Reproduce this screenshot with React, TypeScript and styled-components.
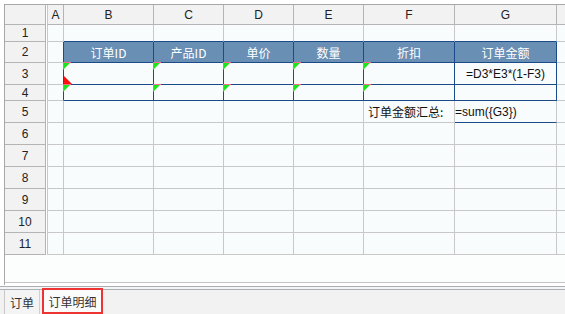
import styled, { createGlobalStyle } from "styled-components";

const GlobalStyle = createGlobalStyle`
	html, body {
		margin: 0;
		padding: 0;
		background: #ffffff;
	}
	body {
		font-family: "Liberation Sans", "Noto Sans CJK SC", sans-serif;
	}
`;

const BLUE = "#1c4b8c";
const GRID = "#c8c8c8";
const HEAD_LINE = "#b4b4b4";
const CELL_BG = "#f8fcfd";

const COL_WIDTHS = [41, 18, 90, 70, 70, 70, 91, 102, 40];
const ROW_HEIGHTS = [17, 21, 22, 16, 22, 22, 22, 22, 22, 22, 22];
const LETTERS = ["A", "B", "C", "D", "E", "F", "G", ""];
const TABLE_HEAD = ["订单ID", "产品ID", "单价", "数量", "折扣", "订单金额"];

const Page = styled.div`
	width: 565px;
	height: 314px;
	overflow: hidden;
	display: flex;
	flex-direction: column;
	background: #ffffff;
`;

const SheetFrame = styled.div`
	height: 286px;
	padding: 4px 0 0 4px;
	box-sizing: border-box;
	display: flex;
`;

const Grid = styled.div`
	flex: 1;
	display: flex;
	flex-direction: column;
	border-left: 1px solid #a8a8a8;
	border-top: 1px solid #a8a8a8;
	overflow: hidden;
`;

const Row = styled.div`
	display: flex;
	flex-shrink: 0;
`;

interface CellProps {
	$w: number;
	$h: number;
	$right?: string;
	$bottom?: string;
	$bg?: string;
	$align?: "left" | "center";
	$pad?: number;
	$inset?: boolean;
}

const Cell = styled.div<CellProps>`
	position: relative;
	box-sizing: border-box;
	flex-shrink: 0;
	width: ${(p) => (p.$inset ? p.$w - 1 : p.$w)}px;
	height: ${(p) => p.$h}px;
	margin-left: ${(p) => (p.$inset ? 1 : 0)}px;
	border-left: ${(p) => (p.$inset ? `1px solid ${GRID}` : "none")};
	border-right: 1px solid ${(p) => p.$right ?? GRID};
	border-bottom: 1px solid ${(p) => p.$bottom ?? GRID};
	background: ${(p) => p.$bg ?? CELL_BG};
	display: flex;
	align-items: center;
	justify-content: ${(p) => (p.$align === "left" ? "flex-start" : "center")};
	padding-left: ${(p) => p.$pad ?? 0}px;
	font-size: 12px;
	color: #111;
	white-space: nowrap;
`;

const HeadCell = styled(Cell)`
	background: #f2f2f2;
	border-right-color: ${HEAD_LINE};
	border-bottom-color: ${HEAD_LINE};
	color: #222;
`;

const TableHeadCell = styled(Cell)`
	background: #6a8fb5;
	color: #ffffff;
	font-family: "Noto Sans CJK SC", "Liberation Sans", sans-serif;
`;

const CjkText = styled.span`
	font-family: "Noto Sans CJK SC", sans-serif;
	font-size: 12px;
`;

const Filler = styled.div`
	height: 27px;
	flex-shrink: 0;
	background: #fcfefe;
	border-bottom: 1px solid #c4c4c4;
`;

const Divider = styled.div`
	height: 4px;
	background: #f4f4f4;
	border-top: 1px solid #a9b0b6;
	border-bottom: 1px solid #a9b0b6;
	box-sizing: border-box;
	margin-top: 1px;
`;

const TabBar = styled.div`
	flex: 1;
	display: flex;
	align-items: stretch;
	padding-left: 4px;
	background: #f2f2f2;
`;

interface TabProps {
	$active?: boolean;
}

const Tab = styled.div<TabProps>`
	box-sizing: border-box;
	display: flex;
	align-items: center;
	justify-content: center;
	white-space: nowrap;
	font-family: "Noto Sans CJK SC", sans-serif;
	font-size: 12px;
	color: #333;
	background: ${(p) => (p.$active ? "#fbfbfb" : "#f4f4f4")};
	border-left: ${(p) => (p.$active ? "none" : "1px solid #c8c8c8")};
	border-right: ${(p) => (p.$active ? "none" : "1px solid #d0d0d0")};
	outline: ${(p) => (p.$active ? "2px solid #ee3333" : "none")};
	outline-offset: -2px;
	margin-top: ${(p) => (p.$active ? -2 : 0)}px;
	margin-left: ${(p) => (p.$active ? 2 : 0)}px;
	height: ${(p) => (p.$active ? 26 : 24)}px;
	width: ${(p) => (p.$active ? 61 : 36)}px;
`;

const Marker = styled.svg`
	position: absolute;
	left: -1px;
	top: -1px;
	width: 8px;
	height: 8px;
`;

const ErrorMarker = styled.svg`
	position: absolute;
	left: 0;
	bottom: 0;
	width: 8px;
	height: 8px;
`;

function GreenMark() {
	return (
		<Marker viewBox="0 0 8 8">
			<polygon points="0,0 8,0 0,8" fill="#1ee41e" />
			<rect x="0" y="0" width="8" height="1" fill="#f0708a" />
			<rect x="0" y="0" width="1" height="7" fill="#f0708a" />
		</Marker>
	);
}

function RedMark() {
	return (
		<ErrorMarker viewBox="0 0 8 8">
			<polygon points="0,0 0,8 8,8" fill="#ff1010" />
		</ErrorMarker>
	);
}

function rightColor(r: number, c: number) {
	if (r >= 2 && r <= 4 && c >= 1 && c <= 7) return BLUE;
	return GRID;
}

function bottomColor(r: number, c: number) {
	if (r >= 1 && r <= 4 && c >= 2 && c <= 7) return BLUE;
	if (r === 5 && c === 7) return BLUE;
	return GRID;
}

function cellContent(r: number, c: number) {
	if (r === 3 && c === 7) return { text: "=D3*E3*(1-F3)", align: "center" as const, pad: 0 };
	if (r === 5 && c === 6) return { text: <CjkText>订单金额汇总:</CjkText>, align: "left" as const, pad: 4 };
	if (r === 5 && c === 7) return { text: "=sum({G3})", align: "left" as const, pad: 0 };
	return null;
}

function App() {
	return (
		<Page>
			<GlobalStyle />
			<SheetFrame>
				<Grid>
					<Row>
						<HeadCell $w={COL_WIDTHS[0]} $h={20} />
						{LETTERS.map((letter, i) => (
							<HeadCell key={i} $w={COL_WIDTHS[i + 1]} $h={20} $inset={i === 0}>
								{letter}
							</HeadCell>
						))}
					</Row>
					{ROW_HEIGHTS.map((h, idx) => {
						const r = idx + 1;
						return (
							<Row key={r}>
								<HeadCell $w={COL_WIDTHS[0]} $h={h}>
									{r}
								</HeadCell>
								{COL_WIDTHS.slice(1).map((w, j) => {
									const c = j + 1;
									if (r === 2 && c >= 2 && c <= 7) {
										return (
											<TableHeadCell key={c} $w={w} $h={h} $right={BLUE} $bottom={BLUE}>
												{TABLE_HEAD[c - 2]}
											</TableHeadCell>
										);
									}
									const content = cellContent(r, c);
									const marked = (r === 3 || r === 4) && c >= 2 && c <= 6;
									return (
										<Cell
											key={c}
											$w={w}
											$h={h}
											$inset={c === 1}
											$right={rightColor(r, c)}
											$bottom={bottomColor(r, c)}
											$align={content?.align}
											$pad={content?.pad}
										>
											{content?.text}
											{marked && <GreenMark />}
											{r === 3 && c === 2 && <RedMark />}
										</Cell>
									);
								})}
							</Row>
						);
					})}
					<Filler />
				</Grid>
			</SheetFrame>
			<Divider />
			<TabBar>
				<Tab>订单</Tab>
				<Tab $active>订单明细</Tab>
			</TabBar>
		</Page>
	);
}

export default App;
